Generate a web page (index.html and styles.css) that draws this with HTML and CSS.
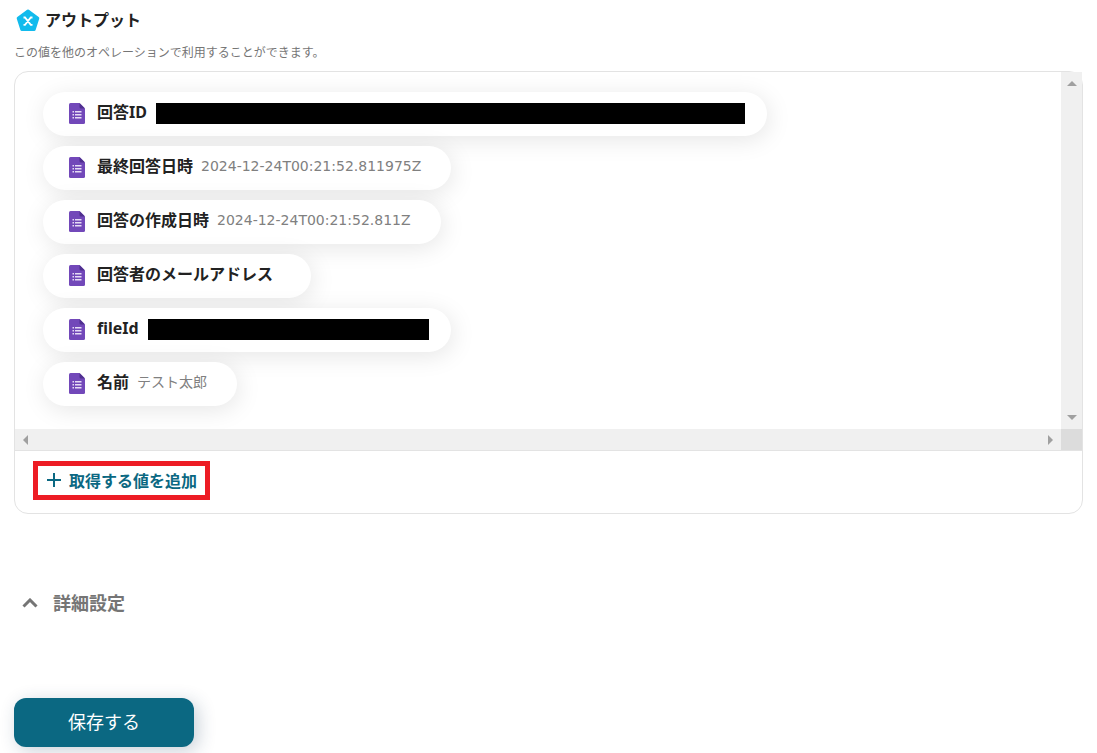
FILE: index.html
```html
<!DOCTYPE html>
<html lang="ja">
<head>
<meta charset="utf-8">
<meta name="viewport" content="width=device-width, initial-scale=1">
<title>アウトプット</title>
<link rel="stylesheet" href="styles.css">
</head>
<body>
<svg class="defs" aria-hidden="true">
  <symbol id="doc" viewBox="0 0 16 22">
    <path fill="#7248b9" d="M1.500 0H10.500L16 5.500V19.500Q16 21 14.500 21H1.500Q0 21 0 19.500V1.500Q0 0 1.500 0Z"/>
    <path fill="#4f2f8f" d="M10.500 0L16 5.500H12Q10.500 5.500 10.500 4Z"/>
    <path fill="#e6dcf5" d="M6 8h6.500v1.500H6zM6 11h6.500v1.500H6zM6 14h6.500v1.500H6zM3.500 8h1.500v1.500H3.500zM3.500 11h1.500v1.500H3.500zM3.500 14h1.500v1.500H3.500z"/>
  </symbol>
</svg>
<main class="page">
  <header class="heading">
    <svg class="heading-icon" viewBox="0 0 24 24" aria-hidden="true">
      <path fill="#12bbed" stroke="#12bbed" stroke-width="3" stroke-linejoin="round" d="M12 3L21.800 10.200L18.200 21.500H5.800L2.200 10.200Z"/>
      <path fill="none" stroke="#fff" stroke-width="1.800" d="M7.500 9.500H9L14.800 16.800H16.500M7.500 16.800H9L14.800 9.500H16.500"/>
    </svg>
    <h1 class="title">アウトプット</h1>
  </header>
  <p class="description">この値を他のオペレーションで利用することができます。</p>

  <section class="panel">
    <div class="viewport">
      <ul class="values">
        <li class="pill pill-masked"><svg class="doc"><use href="#doc"/></svg><span class="label">回答ID</span><span class="mask mask-long"></span></li>
        <li class="pill"><svg class="doc"><use href="#doc"/></svg><span class="label">最終回答日時</span><span class="value">2024-12-24T00:21:52.811975Z</span></li>
        <li class="pill"><svg class="doc"><use href="#doc"/></svg><span class="label">回答の作成日時</span><span class="value">2024-12-24T00:21:52.811Z</span></li>
        <li class="pill"><svg class="doc"><use href="#doc"/></svg><span class="label">回答者のメールアドレス</span><span class="value"></span></li>
        <li class="pill pill-masked"><svg class="doc"><use href="#doc"/></svg><span class="label">fileId</span><span class="mask mask-short"></span></li>
        <li class="pill"><svg class="doc"><use href="#doc"/></svg><span class="label">名前</span><span class="value">テスト太郎</span></li>
      </ul>
      <div class="bar bar-v">
        <svg class="arrow-v" viewBox="0 0 10 5"><path d="M5 0L10 5H0Z"/></svg>
        <svg class="arrow-v" viewBox="0 0 10 5"><path d="M0 0H10L5 5Z"/></svg>
      </div>
      <div class="bar bar-h">
        <svg class="arrow-h" viewBox="0 0 5 10"><path d="M5 0V10L0 5Z"/></svg>
        <svg class="arrow-h" viewBox="0 0 5 10"><path d="M0 0L5 5L0 10Z"/></svg>
      </div>
      <div class="corner"></div>
    </div>
    <div class="panel-footer">
      <button type="button" class="add">
        <svg class="plus" viewBox="0 0 16 16" aria-hidden="true"><path d="M8 1V15M1 8H15"/></svg>
        <span>取得する値を追加</span>
      </button>
    </div>
  </section>

  <button type="button" class="details">
    <svg class="chevron" viewBox="0 0 16 10" aria-hidden="true"><path d="M1.500 8.500L8 2L14.500 8.500"/></svg>
    <span>詳細設定</span>
  </button>

  <button type="button" class="save">保存する</button>
</main>
</body>
</html>
```
FILE: styles.css
```css
* { box-sizing: border-box; }
body {
  margin: 0;
  background: #fff;
  color: #222;
  font-family: "Noto Sans", "Noto Sans CJK JP", sans-serif;
  font-size: 16px;
}
button { font: inherit; cursor: pointer; }
.defs { display: none; }
.page {
  display: flex;
  flex-direction: column;
  align-items: flex-start;
  padding: 8px 14px 6px;
}
.heading { display: flex; align-items: center; gap: 5px; padding-left: 2px; height: 24px; }
.heading-icon { width: 24px; height: 24px; }
.title { margin: 0; font-size: 16px; line-height: 24px; font-weight: 700; }
.description {
  margin: 12px 0 9px;
  font-size: 12px;
  line-height: 18px;
  color: #757575;
}
.panel { align-self: stretch; border: 1px solid #e3e3e3; border-radius: 14px; }
.viewport {
  display: grid;
  grid-template-columns: 1fr 21px;
  grid-template-rows: auto 21px;
  border-bottom: 1px solid #e3e3e3;
}
.values {
  display: flex;
  flex-direction: column;
  align-items: flex-start;
  gap: 10px;
  margin: 0;
  padding: 20px 28px 23px;
  list-style: none;
}
.pill {
  display: flex;
  align-items: center;
  height: 44px;
  padding: 0 30px 0 26px;
  border-radius: 22px;
  background: #fff;
  box-shadow: 2px 4px 24px rgba(0, 0, 0, 0.1);
}
.pill-masked { padding-right: 22px; }
.doc { width: 16px; height: 22px; margin-right: 12px; }
.label { font-weight: 700; line-height: 24px; padding-bottom: 4px; }
.value {
  margin-left: 8px;
  padding-bottom: 4px;
  font-family: "DejaVu Sans", "Noto Sans CJK JP", sans-serif;
  font-size: 14px;
  line-height: 24px;
  color: #808080;
}
.mask { height: 21px; margin-left: 9px; margin-bottom: 2px; background: #000; }
.mask-long { width: 589px; }
.mask-short { width: 281px; }
.bar { display: flex; align-items: center; justify-content: space-between; background: #f0f0f0; }
.bar-v { flex-direction: column; padding: 9px 0; }
.bar-h { padding: 0 8px; }
.bar svg { fill: #a0a0a0; }
.arrow-v { width: 10px; height: 5px; }
.arrow-h { width: 5px; height: 10px; }
.corner { background: #dcdcdc; }
.panel-footer { padding: 10px 18px 13px; }
.add {
  display: flex;
  align-items: center;
  gap: 7px;
  height: 39px;
  padding: 0 8px 1px;
  border: 5px solid #ed1c24;
  background: #fff;
  color: #0b6882;
  font-weight: 700;
}
.plus { width: 16px; height: 16px; fill: none; stroke: #0b6882; stroke-width: 2; }
.details {
  display: flex;
  align-items: center;
  gap: 15px;
  margin-top: 75px;
  padding: 0 8px;
  border: 0;
  background: none;
  color: #757575;
  font-size: 18px;
  line-height: 28px;
  font-weight: 700;
}
.chevron { width: 16px; height: 10px; fill: none; stroke: #757575; stroke-width: 3; }
.save {
  width: 180px;
  height: 49px;
  margin-top: 81px;
  padding: 0 0 3px;
  border: 0;
  border-radius: 12px;
  background: #0b6882;
  color: #fff;
  font-size: 18px;
  box-shadow: 4px 4px 18px rgba(30, 60, 90, 0.24);
}
```
